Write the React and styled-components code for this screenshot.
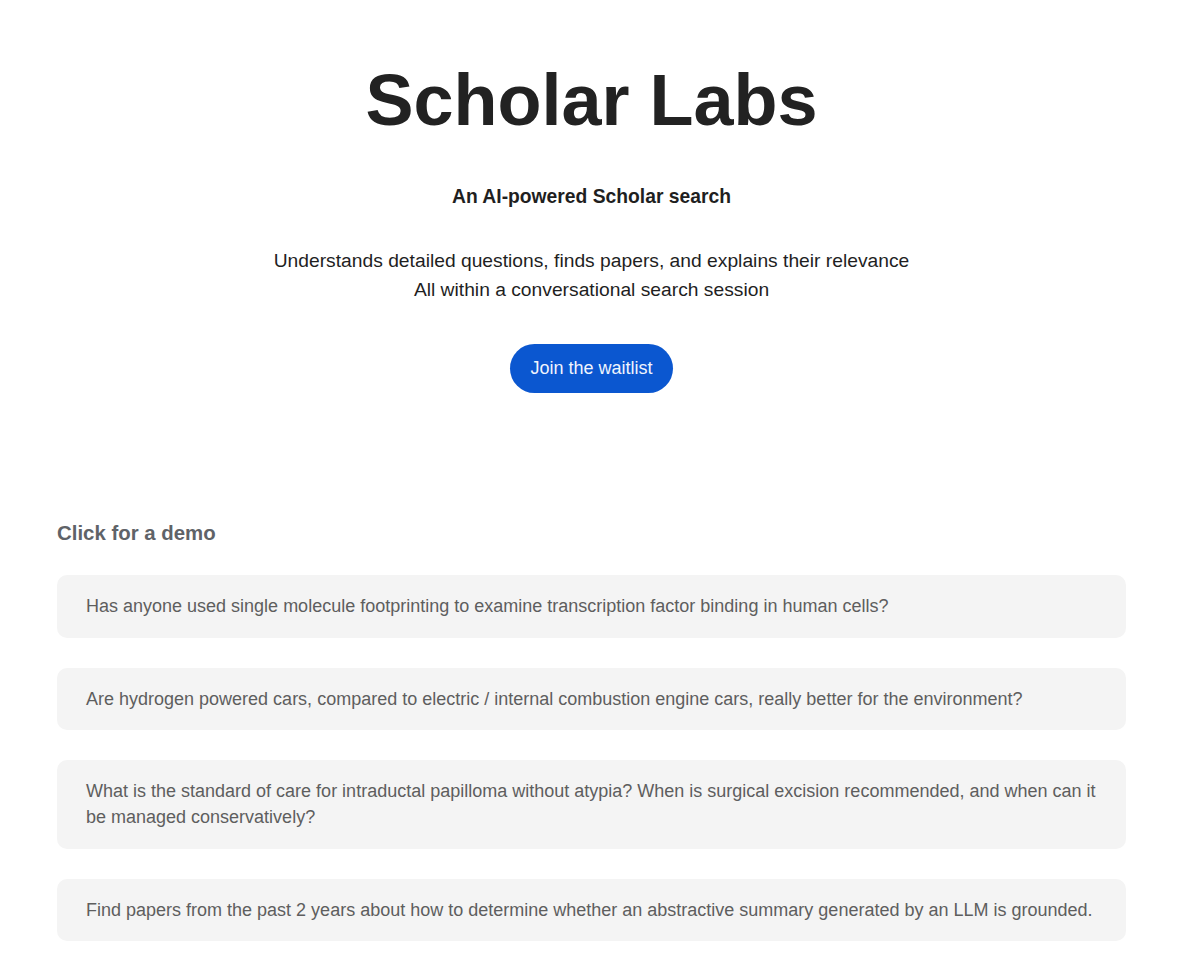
import styled, { createGlobalStyle } from 'styled-components';

const GlobalStyle = createGlobalStyle`
  body {
    margin: 0;
    background: #ffffff;
    font-family: "Liberation Sans", Arial, sans-serif;
  }
`;

const Page = styled.div`
  padding: 0 74px 40px 57px;
`;

const Hero = styled.section`
  display: flex;
  flex-direction: column;
  align-items: center;
  text-align: center;
  padding-top: 60px;
`;

const Title = styled.h1`
  margin: 0;
  font-size: 72px;
  line-height: 80px;
  font-weight: 700;
  color: #222222;
`;

const Tagline = styled.h2`
  margin: 43px 0 0;
  font-size: 19.3px;
  line-height: 28px;
  font-weight: 700;
  color: #1f1f1f;
`;

const Blurb = styled.p`
  margin: 35px 0 0;
  font-size: 19.25px;
  line-height: 29px;
  color: #1f1f1f;
`;

const WaitlistButton = styled.button`
  margin-top: 40px;
  height: 49px;
  padding: 0 20px;
  border: none;
  border-radius: 25px;
  background: #0b57d0;
  color: #f0f4fd;
  font-family: inherit;
  font-size: 18px;
  cursor: pointer;

  &:hover {
    background: #0a4fbd;
  }
`;

const Demos = styled.section`
  margin-top: 128px;
`;

const DemoHeading = styled.h3`
  margin: 0;
  font-size: 20.4px;
  line-height: 24px;
  font-weight: 700;
  color: #5f6368;
`;

const DemoList = styled.div`
  display: flex;
  flex-direction: column;
  gap: 30px;
  margin-top: 30px;
`;

const DemoCard = styled.div`
  padding: 18.25px 28px 18.25px 29px;
  border-radius: 10px;
  background: #f4f4f4;
  color: #5e5e5e;
  font-size: 18px;
  line-height: 26px;
  cursor: pointer;
`;

const demos = [
  'Has anyone used single molecule footprinting to examine transcription factor binding in human cells?',
  'Are hydrogen powered cars, compared to electric / internal combustion engine cars, really better for the environment?',
  'What is the standard of care for intraductal papilloma without atypia? When is surgical excision recommended, and when can it be managed conservatively?',
  'Find papers from the past 2 years about how to determine whether an abstractive summary generated by an LLM is grounded.',
];

const App = () => (
  <>
    <GlobalStyle />
    <Page>
      <Hero>
        <Title>Scholar Labs</Title>
        <Tagline>An AI-powered Scholar search</Tagline>
        <Blurb>
          Understands detailed questions, finds papers, and explains their relevance
          <br />
          All within a conversational search session
        </Blurb>
        <WaitlistButton>Join the waitlist</WaitlistButton>
      </Hero>

      <Demos>
        <DemoHeading>Click for a demo</DemoHeading>
        <DemoList>
          {demos.map((q) => (
            <DemoCard key={q}>{q}</DemoCard>
          ))}
        </DemoList>
      </Demos>
    </Page>
  </>
);

export default App;
